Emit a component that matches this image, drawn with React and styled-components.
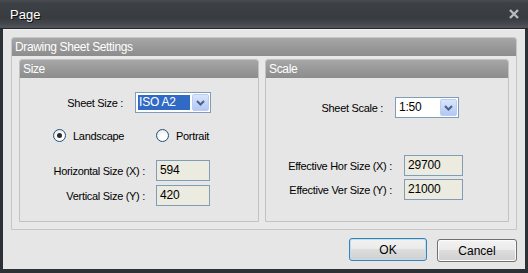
import React from 'react';
import styled, { createGlobalStyle } from 'styled-components';

const GlobalStyle = createGlobalStyle`
  html, body {
    margin: 0;
    padding: 0;
    background: #2e3135;
  }
  body {
    font-family: "Liberation Sans", Arial, sans-serif;
    font-size: 11px;
    letter-spacing: -0.3px;
    color: #000;
  }
`;

const Window = styled.div`
  width: 528px;
  height: 273px;
  display: flex;
  flex-direction: column;
  background: #2d3034;
  box-sizing: border-box;
  overflow: hidden;
`;

const TitleBar = styled.div`
  height: 28px;
  flex: none;
  display: flex;
  align-items: center;
  justify-content: space-between;
  padding: 0 9px 0 10px;
  background: linear-gradient(#4a4d52 0px, #3d4045 3px, #383b40 18px, #45484d 24px, #50535a 27px);
  border-bottom: 1px solid #25272a;
`;

const Title = styled.span`
  color: #fff;
  font-size: 13px;
  letter-spacing: 0;
  text-shadow: 1px 1px 0 #111;
  margin-top: 1px;
`;

const Body = styled.div`
  flex: 1;
  margin: 0 3px 4px 3px;
  background: #e6e6e6;
  border-top: 1px solid #f0f0f0;
  padding: 7px 8px 0 8px;
  display: flex;
  flex-direction: column;
`;

const Group = styled.div`
  border: 1px solid #c6c6c6;
  border-radius: 3px 3px 0 0;
  background: #e8e8e8;
  display: flex;
  flex-direction: column;
  height: 193px;
  box-sizing: border-box;
`;

const GroupHeader = styled.div`
  height: 18px;
  flex: none;
  background: linear-gradient(#a6a6a6, #8c8c8c);
  border-radius: 2px 2px 0 0;
  color: #fff;
  font-size: 12px;
  letter-spacing: -0.35px;
  line-height: 18px;
  padding-left: 3px;
`;

const Panels = styled.div`
  display: flex;
  gap: 6px;
  padding: 3px 7px 0 7px;
`;

const Panel = styled.div`
  width: ${(p) => p.$w}px;
  height: 163px;
  box-sizing: border-box;
  border: 1px solid #c2c2c2;
  border-radius: 3px 3px 0 0;
  background: #e6e6e6;
  display: flex;
  flex-direction: column;
`;

const Row = styled.div`
  display: flex;
  align-items: center;
  justify-content: ${(p) => (p.$start ? 'flex-start' : 'flex-end')};
  gap: ${(p) => (p.$gap === undefined ? 12 : p.$gap)}px;
  margin-top: ${(p) => p.$top}px;
  padding-left: ${(p) => p.$left || 0}px;
  padding-right: ${(p) => p.$right || 0}px;
`;

const Label = styled.span`
  white-space: nowrap;
`;

const SelectBox = styled.div`
  width: ${(p) => p.$w}px;
  height: 21px;
  box-sizing: border-box;
  border: 1px solid #7f9db9;
  background: #fff;
  display: flex;
  align-items: center;
  padding: 0 1px 0 2px;
  gap: 2px;
`;

const SelectValue = styled.div`
  flex: 1;
  height: 15px;
  line-height: 15px;
  padding-left: 1px;
  font-size: 12px;
  letter-spacing: -0.2px;
  background: ${(p) => (p.$selected ? '#316ac5' : 'transparent')};
  color: ${(p) => (p.$selected ? '#fff' : '#000')};
`;

const ArrowButton = styled.div`
  width: 17px;
  height: 17px;
  box-sizing: border-box;
  border: 1px solid #bccdf3;
  border-radius: 2px;
  background: linear-gradient(#dbe6fd, #c2d3f9 60%, #b3c8f6);
  display: flex;
  align-items: center;
  justify-content: center;
`;

const RadioItem = styled.label`
  display: flex;
  align-items: center;
  gap: 7px;
  width: ${(p) => (p.$w ? `${p.$w}px` : 'auto')};
`;

const RadioCircle = styled.span`
  width: 13px;
  height: 13px;
  box-sizing: border-box;
  border-radius: 50%;
  border: 1px solid #1d5281;
  background: radial-gradient(circle at 60% 65%, #ffffff 30%, #dcdcd6 100%);
  display: flex;
  align-items: center;
  justify-content: center;
  &::after {
    content: '';
    width: 5px;
    height: 5px;
    border-radius: 50%;
    background: ${(p) => (p.$checked ? '#2a2a2a' : 'transparent')};
  }
`;

const TextInput = styled.div`
  width: ${(p) => p.$w}px;
  height: 21px;
  box-sizing: border-box;
  border: 1px solid #7f9db9;
  background: #ecebdf;
  font-size: 12px;
  letter-spacing: -0.2px;
  line-height: 19px;
  padding-left: 3px;
`;

const Footer = styled.div`
  display: flex;
  justify-content: flex-end;
  gap: 10px;
  margin-top: 8px;
`;

const Button = styled.button`
  width: ${(p) => p.$w}px;
  height: 23px;
  font-family: "Liberation Sans", Arial, sans-serif;
  font-size: 12px;
  color: #000;
  border-radius: 3px;
  border: 1px solid ${(p) => (p.$focus ? '#3c7fb1' : '#707070')};
  background: linear-gradient(#f2f2f2, #ebebeb 45%, #dddddd 50%, #cfcfcf);
  box-shadow: inset 0 0 0 1px ${(p) => (p.$focus ? '#b9e0f5' : '#fbfbfb')};
  margin-top: ${(p) => p.$top || 0}px;
  padding: 0;
`;

const CloseIcon = () => (
  <svg width="10" height="10" viewBox="0 0 10 10">
    <path d="M1 1 L9 9 M9 1 L1 9" stroke="#b7bbc2" strokeWidth="2.4" />
  </svg>
);

const Chevron = () => (
  <svg width="9" height="6" viewBox="0 0 9 6">
    <path d="M1 1 L4.5 4.5 L8 1" fill="none" stroke="#4d6185" strokeWidth="2" />
  </svg>
);

const Select = ({ value, width, selected }) => (
  <SelectBox $w={width}>
    <SelectValue $selected={selected}>{value}</SelectValue>
    <ArrowButton>
      <Chevron />
    </ArrowButton>
  </SelectBox>
);

const App = () => (
  <Window>
    <GlobalStyle />
    <TitleBar>
      <Title>Page</Title>
      <CloseIcon />
    </TitleBar>
    <Body>
      <Group>
        <GroupHeader>Drawing Sheet Settings</GroupHeader>
        <Panels>
          <Panel $w={240}>
            <GroupHeader>Size</GroupHeader>
            <Row $top={14} $right={47}>
              <Label>Sheet Size :</Label>
              <Select value="ISO A2" width={76} selected />
            </Row>
            <Row $top={16} $start $left={33} $gap={0}>
              <RadioItem $w={103}>
                <RadioCircle $checked />
                Landscape
              </RadioItem>
              <RadioItem>
                <RadioCircle />
                Portrait
              </RadioItem>
            </Row>
            <Row $top={18} $right={48} $gap={11}>
              <Label>Horizontal Size (X) :</Label>
              <TextInput $w={54}>594</TextInput>
            </Row>
            <Row $top={4} $right={48} $gap={11}>
              <Label>Vertical Size (Y) :</Label>
              <TextInput $w={54}>420</TextInput>
            </Row>
          </Panel>
          <Panel $w={244}>
            <GroupHeader>Scale</GroupHeader>
            <Row $top={19} $right={49}>
              <Label>Sheet Scale :</Label>
              <Select value="1:50" width={64} />
            </Row>
            <Row $top={37} $right={45}>
              <Label>Effective Hor Size (X) :</Label>
              <TextInput $w={59}>29700</TextInput>
            </Row>
            <Row $top={3} $right={45}>
              <Label>Effective Ver Size (Y) :</Label>
              <TextInput $w={59}>21000</TextInput>
            </Row>
          </Panel>
        </Panels>
      </Group>
      <Footer>
        <Button $w={78} $focus>OK</Button>
        <Button $w={80} $top={1}>Cancel</Button>
      </Footer>
    </Body>
  </Window>
);

export default App;
